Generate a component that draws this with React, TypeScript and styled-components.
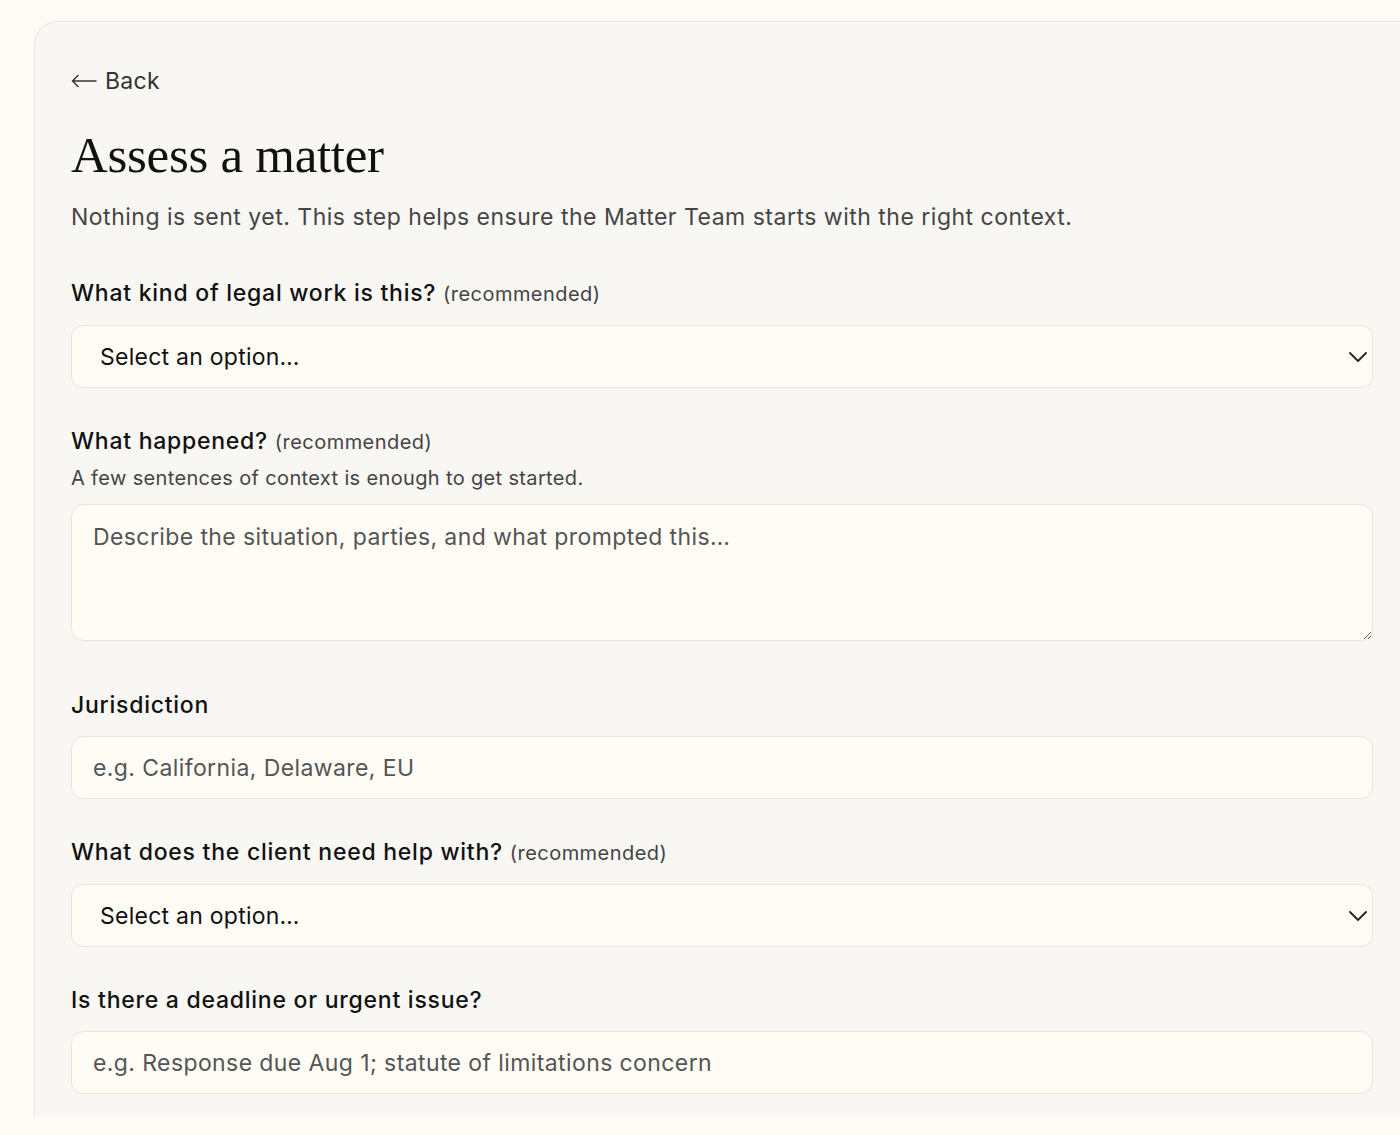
import React from "react";
import styled, { createGlobalStyle } from "styled-components";

const Global = createGlobalStyle`
  html, body {
    margin: 0;
    padding: 0;
    background: #fdfbf4;
    overflow-x: hidden;
  }
  body {
    font-family: Inter, "Noto Sans", "Liberation Sans", sans-serif;
    color: #111;
  }
  * { box-sizing: border-box; }
`;

const Page = styled.div`
  padding: 21px 0 0 34px;
  width: 1409px;
`;

const Panel = styled.main`
  background: #f8f7f3;
  border: 1px solid #e9e7e1;
  border-bottom: none;
  border-right: none;
  border-radius: 24px 0 0 0;
  padding: 43px 36px 22px 36px;
  display: flex;
  flex-direction: column;
`;

const BackLink = styled.a`
  font-size: 23px;
  line-height: 32px;
  color: #333;
  text-decoration: none;
  display: flex;
  align-items: center;
  gap: 8px;
  letter-spacing: 0.3px;
  cursor: pointer;
`;

const Title = styled.h1`
  font-family: "Liberation Serif", "Times New Roman", serif;
  font-weight: 400;
  font-size: 51px;
  line-height: 58px;
  margin: 29px 0 0 0;
  color: #111;
  letter-spacing: -0.3px;
`;

const Subtitle = styled.p`
  font-size: 23px;
  line-height: 30px;
  margin: 18px 0 0 0;
  color: #454545;
  letter-spacing: 0.5px;
`;

const Field = styled.div<{ $first?: boolean }>`
  display: flex;
  flex-direction: column;
  margin-top: ${(p) => (p.$first ? "46px" : "38px")};
`;

const Label = styled.label`
  font-size: 23px;
  line-height: 30px;
  font-weight: 500;
  color: #111;
  letter-spacing: 0.75px;
`;

const Hint = styled.span`
  font-size: 20px;
  font-weight: 400;
  color: #444;
  letter-spacing: 0.45px;
`;

const Help = styled.div`
  font-size: 20px;
  line-height: 26px;
  color: #444;
  margin-top: 8px;
  letter-spacing: 0.35px;
`;

const controlBase = `
  width: 100%;
  background: #fefcf5;
  border: 1px solid #e8e5dd;
  border-radius: 12px;
  font-family: Inter, "Noto Sans", "Liberation Sans", sans-serif;
  font-size: 23px;
  outline: none;
`;

const SelectWrap = styled.div`
  position: relative;
  margin-top: 16px;
`;

const Select = styled.select`
  ${controlBase}
  appearance: none;
  -webkit-appearance: none;
  height: 63px;
  padding: 0 60px 0 28px;
  color: #111;
  letter-spacing: 0.25px;
`;

const Chevron = styled.svg`
  position: absolute;
  right: 6px;
  top: 27px;
  pointer-events: none;
`;

const Input = styled.input`
  ${controlBase}
  height: 63px;
  padding: 0 21px;
  margin-top: 16px;
  color: #111;
  letter-spacing: 0.4px;
  &::placeholder { color: #555; }
`;

const TextArea = styled.textarea`
  ${controlBase}
  display: block;
  height: 137px;
  padding: 17px 21px;
  margin-top: 13px;
  margin-bottom: 11px;
  line-height: 30px;
  resize: vertical;
  color: #111;
  letter-spacing: 0.4px;
  &::placeholder { color: #555; }
`;

function BackArrow() {
  return (
    <svg width="26" height="14" viewBox="0 0 26 14" fill="none">
      <path d="M25 7H1.5M7 1.5L1.5 7L7 12.5" stroke="#333" strokeWidth="1.5" strokeLinecap="round" strokeLinejoin="round" />
    </svg>
  );
}

function ChevronIcon() {
  return (
    <Chevron width="18" height="10" viewBox="0 0 18 10" fill="none">
      <polyline points="1,1 9,9 17,1" stroke="#222" strokeWidth="1.8" strokeLinecap="round" strokeLinejoin="round" />
    </Chevron>
  );
}

function SelectField({ label, hint, first }: { label: string; hint?: string; first?: boolean }) {
  return (
    <Field $first={first}>
      <Label>
        {label} {hint && <Hint>{hint}</Hint>}
      </Label>
      <SelectWrap>
        <Select defaultValue="">
          <option value="">Select an option…</option>
        </Select>
        <ChevronIcon />
      </SelectWrap>
    </Field>
  );
}

export default function App() {
  return (
    <>
      <Global />
      <Page>
        <Panel>
          <BackLink>
            <BackArrow />
            Back
          </BackLink>
          <Title>Assess a matter</Title>
          <Subtitle>
            Nothing is sent yet. This step helps ensure the Matter Team starts with the right context.
          </Subtitle>
          <SelectField first label="What kind of legal work is this?" hint="(recommended)" />
          <Field>
            <Label>
              What happened? <Hint>(recommended)</Hint>
            </Label>
            <Help>A few sentences of context is enough to get started.</Help>
            <TextArea placeholder="Describe the situation, parties, and what prompted this…" />
          </Field>
          <Field>
            <Label>Jurisdiction</Label>
            <Input placeholder="e.g. California, Delaware, EU" />
          </Field>
          <SelectField label="What does the client need help with?" hint="(recommended)" />
          <Field>
            <Label>Is there a deadline or urgent issue?</Label>
            <Input placeholder="e.g. Response due Aug 1; statute of limitations concern" />
          </Field>
        </Panel>
      </Page>
    </>
  );
}
